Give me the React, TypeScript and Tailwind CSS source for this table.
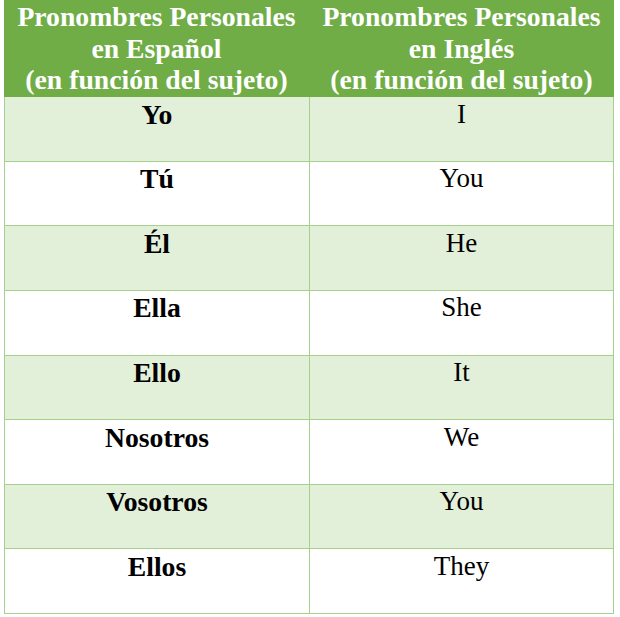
import React from "react";

const rows: [string, string][] = [
  ["Yo", "I"],
  ["Tú", "You"],
  ["Él", "He"],
  ["Ella", "She"],
  ["Ello", "It"],
  ["Nosotros", "We"],
  ["Vosotros", "You"],
  ["Ellos", "They"],
];

const App: React.FC = () => {
  return (
    <div className="w-[620px] h-[617px] bg-white pl-[4px] [font-family:'Liberation_Serif',serif]">
      <div className="w-[610px]">
        <div className="flex h-[97px] bg-[#70ad47] text-white font-bold text-[27.7px] leading-[31.5px] text-center">
          <div className="w-[305px] pt-[1px]">
            Pronombres Personales
            <br />
            en Español
            <br />
            (en función del sujeto)
          </div>
          <div className="flex-1 pt-[1px]">
            Pronombres Personales
            <br />
            en Inglés
            <br />
            (en función del sujeto)
          </div>
        </div>
        {rows.map(([es, en], i) => (
          <div
            key={i}
            className={`flex h-[64.625px] border-x border-b border-[#a8d08d] text-black text-center leading-[31.5px] ${
              i % 2 === 0 ? "bg-[#e2efd9]" : "bg-white"
            }`}
          >
            <div className="w-[305px] border-r border-[#a8d08d] pt-[1.5px] font-bold text-[27.7px]">
              {es}
            </div>
            <div className="flex-1 pt-[1.5px] text-[27px]">{en}</div>
          </div>
        ))}
      </div>
    </div>
  );
};

export default App;
